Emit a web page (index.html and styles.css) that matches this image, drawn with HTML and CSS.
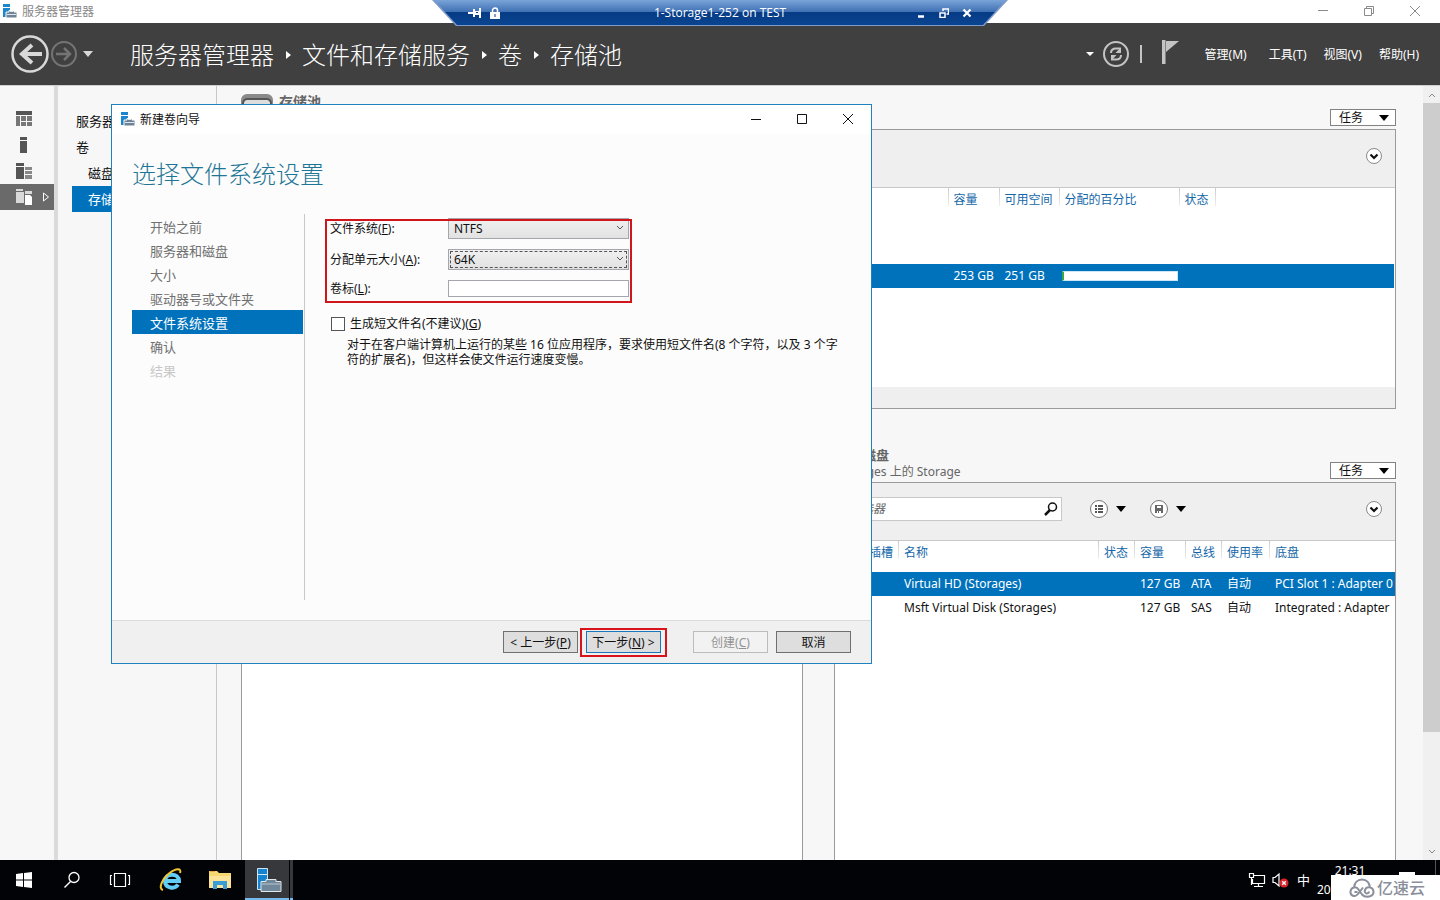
FILE: index.html
```html
<!DOCTYPE html>
<html lang="zh-CN">
<head>
<meta charset="utf-8">
<title>服务器管理器</title>
<link rel="stylesheet" href="styles.css">
</head>
<body>
<svg width="0" height="0" class="defs" aria-hidden="true">
  <symbol id="server" viewBox="0 0 16 16">
    <path d="M1 0h7v3H1zM1 4h7v3L5 9v4H1z" fill="#1c86cc"/>
    <path d="M7 8V6.500h5V8h3v6H4V8z" fill="#6e8496" stroke="#fff" stroke-width="1"/>
    <path d="M8 7.500h3M5 10.500h9" stroke="#dfe8ef" stroke-width="1" fill="none"/>
  </symbol>
  <symbol id="chevron-circle" viewBox="0 0 18 18">
    <circle cx="9" cy="9" r="7.500" fill="#fff" stroke="#8a8a8a"/>
    <path d="M5.500 7.500L9 11l3.500-3.500" fill="none" stroke="#111" stroke-width="2.200"/>
  </symbol>
</svg>

<div class="desktop">
  <header class="titlebar">
    <svg class="app-icon" viewBox="0 0 16 16"><use href="#server"/></svg>
    <span class="titlebar-text">服务器管理器</span>
    <div class="window-buttons">
      <button aria-label="最小化"><svg viewBox="0 0 12 12"><path d="M1 5.500h10"/></svg></button>
      <button aria-label="还原"><svg viewBox="0 0 12 12"><path d="M1.500 3.500h7v7h-7zM3.500 3V1.500h7v7H9"/></svg></button>
      <button aria-label="关闭"><svg viewBox="0 0 12 12"><path d="M1 1l10 10M11 1L1 11"/></svg></button>
    </div>
  </header>

  <div class="banner">
    <div class="history">
      <button aria-label="后退"><svg class="back" viewBox="0 0 38 38"><circle cx="19" cy="19" r="17.500" fill="none" stroke="#d8d8d8" stroke-width="2.500"/><path d="M31 19H10M21 10l-10 9 10 9" fill="none" stroke="#d8d8d8" stroke-width="4"/></svg></button>
      <button aria-label="前进"><svg class="forward" viewBox="0 0 26 26"><circle cx="13" cy="13" r="12" fill="none" stroke="#747474" stroke-width="2"/><path d="M5 13h14M13 7l6 6-6 6" fill="none" stroke="#747474" stroke-width="2.500"/></svg></button>
      <button aria-label="历史记录"><svg class="drop" viewBox="0 0 10 6"><path d="M0 0h10L5 6z" fill="#d8d8d8"/></svg></button>
    </div>
    <nav class="breadcrumb">
      <a href="#">服务器管理器</a><span class="sep"></span>
      <a href="#">文件和存储服务</a><span class="sep"></span>
      <a href="#">卷</a><span class="sep"></span>
      <a href="#">存储池</a>
    </nav>
    <div class="banner-tools">
      <svg class="mini-drop" viewBox="0 0 8 4"><path d="M0 0h8L4 4z" fill="#fff"/></svg>
      <button aria-label="刷新"><svg class="refresh" viewBox="0 0 26 26"><circle cx="13" cy="13" r="12" fill="none" stroke="#c4c4c4" stroke-width="2"/><path d="M8 12c0-3 2-4.500 5-4.500h4M18 14c0 3-2 4.500-5 4.500H9" fill="none" stroke="#c4c4c4" stroke-width="2"/><path d="M18 6v6h-5.500zM8 20v-6h5.500z" fill="#c4c4c4"/></svg></button>
      <span class="bar"></span>
      <button aria-label="通知"><svg class="flag" viewBox="0 0 18 24"><path d="M0 0h3.500v24H0zM4 1h13L4 12z" fill="#c4c4c4"/></svg></button>
    </div>
    <nav class="menu">
      <a href="#">管理(M)</a><a href="#">工具(T)</a><a href="#">视图(V)</a><a href="#">帮助(H)</a>
    </nav>
  </div>

  <div class="workspace">
    <nav class="rail">
      <a href="#" aria-label="仪表板"><svg viewBox="0 0 16 16"><path d="M0 0h16v4H0z" fill="#555"/><path d="M0 5h4v10H0zM5 5h5v5H5zM11 5h5v5h-5zM5 11h5v4H5zM11 11h5v4h-5z" fill="#777"/></svg></a>
      <a href="#" aria-label="本地服务器"><svg viewBox="0 0 16 16"><path d="M4 0h7v3H4zM4 4h7v12H4z" fill="#555"/></svg></a>
      <a href="#" aria-label="所有服务器"><svg viewBox="0 0 16 16"><path d="M0 0h8v3H0zM0 4h8v12H0z" fill="#555"/><path d="M9 4h7v3H9zM9 8h7v3H9zM9 12h7v4H9z" fill="#888"/></svg></a>
      <a href="#" class="active" aria-label="文件和存储服务"><svg viewBox="0 0 16 16"><path d="M0 0h7v2H0zM0 3h8v11H0zM9 2h7v3H9z" fill="#d9d9d9"/><path d="M9 6h5l2 2v8H9z" fill="#fff"/></svg><svg class="rail-arrow" viewBox="0 0 8 10"><path d="M1.500 1v8l5-4z" fill="none" stroke="#fff"/></svg></a>
    </nav>
    <nav class="side">
      <a href="#">服务器</a>
      <a href="#">卷</a>
      <a href="#" class="sub">磁盘</a>
      <a href="#" class="sub selected">存储池</a>
    </nav>

    <main class="content">
      <section class="tile pools">
        <div class="tile-head">
          <svg class="disk" viewBox="0 0 32 32"><rect x="0" y="0" width="32" height="32" rx="6" fill="#8a8a8a"/><path d="M2 9c0-2 2-4 4-4h20c2 0 4 2 4 4v22H2z" fill="#ddd" stroke="#555" stroke-width="2"/></svg>
          <div class="tile-title"><h2>存储池</h2></div>
          <button class="tasks">任务<svg viewBox="0 0 10 6"><path d="M0 0h10L5 6z"/></svg></button>
        </div>
        <div class="panel">
          <div class="toolbar"><button class="expand" aria-label="展开"><svg viewBox="0 0 18 18"><use href="#chevron-circle"/></svg></button></div>
          <table class="grid pools-grid">
            <colgroup><col><col class="w51"><col class="w60"><col class="w120"><col class="w36"><col class="w180"></colgroup>
            <thead><tr><td></td><th>容量</th><th>可用空间</th><th>分配的百分比</th><th>状态</th><th></th></tr></thead>
            <tbody><tr class="selected"><td></td><td>253 GB</td><td>251 GB</td><td><div class="meter"></div></td><td></td><td></td></tr></tbody>
          </table>
          <div class="panel-foot"></div>
        </div>
      </section>

      <div class="pair">
        <section class="tile">
          <div class="tile-head"></div>
          <div class="panel"></div>
        </section>
        <section class="tile">
          <div class="tile-head">
            <div class="tile-title"><h2>物理磁盘</h2><p>Storages 上的 Storage</p></div>
            <button class="tasks">任务<svg viewBox="0 0 10 6"><path d="M0 0h10L5 6z"/></svg></button>
          </div>
          <div class="panel">
            <div class="toolbar">
              <div class="filter">
                <input type="text" placeholder="筛选器" aria-label="筛选器">
                <svg viewBox="0 0 14 14"><circle cx="8.500" cy="5" r="4" fill="none" stroke="#111" stroke-width="1.500"/><path d="M6 8l-5 5" stroke="#111" stroke-width="2.500"/></svg>
              </div>
              <button class="tool" aria-label="视图"><svg class="round" viewBox="0 0 18 18"><circle cx="9" cy="9" r="8.500" fill="#fff" stroke="#777"/><path d="M5 6h2M5 9h2M5 12h2M8 6h5M8 9h5M8 12h5" stroke="#555" stroke-width="1.800"/></svg><svg class="tri" viewBox="0 0 10 6"><path d="M0 0h10L5 6z"/></svg></button>
              <button class="tool" aria-label="保存"><svg class="round" viewBox="0 0 18 18"><circle cx="9" cy="9" r="8.500" fill="#fff" stroke="#777"/><path d="M5 5h8v8H5z" fill="#666"/><path d="M7 6h4v2H7zM7 11h1v2H7zM9 11h2v2H9z" fill="#fff"/></svg><svg class="tri" viewBox="0 0 10 6"><path d="M0 0h10L5 6z"/></svg></button>
              <button class="expand" aria-label="展开"><svg viewBox="0 0 18 18"><use href="#chevron-circle"/></svg></button>
            </div>
            <table class="grid disks-grid">
              <colgroup><col class="w63"><col><col class="w36"><col class="w51"><col class="w36"><col class="w48"><col class="w126"></colgroup>
              <thead><tr><th class="right">插槽</th><th>名称</th><th>状态</th><th>容量</th><th>总线</th><th>使用率</th><th>底盘</th></tr></thead>
              <tbody>
                <tr class="selected"><td></td><td>Virtual HD (Storages)</td><td></td><td>127 GB</td><td>ATA</td><td>自动</td><td>PCI Slot 1 : Adapter 0</td></tr>
                <tr><td></td><td>Msft Virtual Disk (Storages)</td><td></td><td>127 GB</td><td>SAS</td><td>自动</td><td>Integrated : Adapter</td></tr>
              </tbody>
            </table>
          </div>
        </section>
      </div>
    </main>

    <div class="scroll">
      <svg viewBox="0 0 8 5"><path d="M1 4l3-3 3 3"/></svg>
      <div class="thumb"></div>
      <svg viewBox="0 0 8 5"><path d="M1 1l3 3 3-3"/></svg>
    </div>
  </div>

  <footer class="taskbar">
    <button aria-label="开始"><svg width="16" height="16" viewBox="0 0 16 16"><path d="M0 2l7-1v6.500H0zM8 1l8-1v7.500H8zM0 8.500h7V15l-7-1zM8 8.500h8V16l-8-1z" fill="#fff"/></svg></button>
    <button aria-label="搜索"><svg width="18" height="18" viewBox="0 0 18 18"><circle cx="11" cy="6.500" r="5" fill="none" stroke="#fff" stroke-width="1.300"/><path d="M7.500 10.500L1.500 16.500" stroke="#fff" stroke-width="1.500"/></svg></button>
    <button aria-label="任务视图"><svg width="22" height="16" viewBox="0 0 22 16"><path d="M5.500 1.500h11v13h-11zM3 3.500H1.500v9H3M19 3.500h1.500v9H19" fill="none" stroke="#fff" stroke-width="1.200"/></svg></button>
    <button class="wide" aria-label="Internet Explorer"><svg width="24" height="24" viewBox="0 0 24 24"><path d="M19 16.500c-3 5-13 4-13-3.500 0-8.500 14-8.500 14 0H7" fill="none" stroke="#62cdf5" stroke-width="4"/><path d="M4 22C-1 21 3 11 10 5.500S23 0 21 5" fill="none" stroke="#f3c52f" stroke-width="2"/></svg></button>
    <button class="wide" aria-label="文件资源管理器"><svg width="22" height="20" viewBox="0 0 22 20"><path d="M0 1h8l2 2h12v15H0z" fill="#f6d873"/><path d="M1 1h5v1H1z" fill="#e8a33d"/><path d="M0 6h22v12H0z" fill="#fbe49a"/><path d="M4 19v-8h14v8h-4v-4H8v4z" fill="#3a9ed6"/></svg></button>
    <button class="running" aria-label="服务器管理器"><svg width="26" height="26" viewBox="0 0 26 26"><path d="M1.500 2.500h10v21h-10z" fill="#1683cf" stroke="#cfe6f6"/><path d="M1 8.500h11" stroke="#cfe6f6"/><path d="M10 15.500V13.500h10v2h5v10H5v-10z" fill="#71879a" stroke="#dfe8ef"/><path d="M6 18h18" stroke="#b9c8d4"/></svg></button>
    <span class="running-more"></span>
    <div class="tray">
      <svg width="18" height="16" viewBox="0 0 18 16"><path d="M6 3.500h10.500v8H4.500V7M10.500 12v2M6 14.500h9M1.500 1.500h4v4h-4zM3.500 6v7" fill="none" stroke="#fff" stroke-width="1.200"/></svg>
      <svg width="18" height="16" viewBox="0 0 18 16"><path d="M1 5.500h2l4-3.500v12l-4-3.500H1z" fill="none" stroke="#fff" stroke-width="1.200"/><circle cx="12" cy="11" r="4.500" fill="#d9252a"/><path d="M10.200 9.200l3.600 3.600M13.800 9.200l-3.600 3.600" stroke="#fff" stroke-width="1.300"/></svg>
      <span class="ime">中</span>
      <div class="clock"><span>21:31</span><span class="date">20</span></div>
      <svg class="note" width="16" height="16" viewBox="0 0 16 16"><path d="M0 0h16v12H0z" fill="#fff"/></svg>
      <span class="peek"></span>
    </div>
  </footer>
</div>

<div class="remote-bar">
  <div class="remote-inner">
    <svg class="pin" viewBox="0 0 14 12"><path d="M0 6h6M6 2v8M6 6h6M12 1v10" fill="none" stroke="#fff" stroke-width="2"/><path d="M6 4h5v4H6z" fill="#fff"/><path d="M8 5h2v1H8z" fill="#12408b"/></svg>
    <svg class="lock" viewBox="0 0 10 12"><path d="M2.500 6V3.500a2.500 2.500 0 0 1 5 0V6" fill="none" stroke="#fff" stroke-width="1.500"/><path d="M0 5h10v7H0z" fill="#fff"/><path d="M4.500 7h1v3h-1z" fill="#12408b"/></svg>
    <span class="remote-name">1-Storage1-252 on TEST</span>
    <div class="remote-buttons">
      <button aria-label="最小化"><svg viewBox="0 0 10 10"><path d="M2 8.500h6" stroke-width="2.500"/></svg></button>
      <button aria-label="还原"><svg viewBox="0 0 10 10"><path d="M1 5h5v4.500H1zM4 3V1h5.500v5H7.500" stroke-width="1.500"/></svg></button>
      <button aria-label="关闭"><svg viewBox="0 0 10 10"><path d="M1.500 1.500l7 7M8.500 1.500l-7 7" stroke-width="2.200"/></svg></button>
    </div>
  </div>
</div>

<form class="dialog" role="dialog" aria-labelledby="wizard-name">
  <div class="dialog-bar">
    <svg class="app-icon" viewBox="0 0 16 16"><use href="#server"/></svg>
    <span id="wizard-name">新建卷向导</span>
    <div class="window-buttons dark">
      <button type="button" aria-label="最小化"><svg viewBox="0 0 12 12"><path d="M1 6.500h10"/></svg></button>
      <button type="button" aria-label="最大化"><svg viewBox="0 0 12 12"><path d="M1.500 1.500h9v9h-9z"/></svg></button>
      <button type="button" aria-label="关闭"><svg viewBox="0 0 12 12"><path d="M1 1l10 10M11 1L1 11"/></svg></button>
    </div>
  </div>
  <h1>选择文件系统设置</h1>
  <div class="dialog-body">
    <ol class="steps">
      <li>开始之前</li><li>服务器和磁盘</li><li>大小</li><li>驱动器号或文件夹</li><li class="current">文件系统设置</li><li>确认</li><li class="pending">结果</li>
    </ol>
    <div class="fields">
      <div class="field-grid">
        <label for="fs">文件系统(<u>F</u>):</label>
        <div class="select"><select id="fs"><option>NTFS</option></select><svg viewBox="0 0 8 5"><path d="M1 1l3 3 3-3"/></svg></div>
        <label for="unit">分配单元大小(<u>A</u>):</label>
        <div class="select focused"><select id="unit"><option>64K</option></select><svg viewBox="0 0 8 5"><path d="M1 1l3 3 3-3"/></svg></div>
        <label for="vol">卷标(<u>L</u>):</label>
        <input id="vol" class="text" type="text">
      </div>
      <div class="check"><input type="checkbox" id="short"><label for="short">生成短文件名(不建议)(<u>G</u>)</label></div>
      <p class="hint">对于在客户端计算机上运行的某些 16 位应用程序，要求使用短文件名(8 个字符，以及 3 个字符的扩展名)，但这样会使文件运行速度变慢。</p>
    </div>
  </div>
  <div class="dialog-foot">
    <button type="button">&lt; 上一步(<u>P</u>)</button>
    <span class="marked"><button type="button" class="primary">下一步(<u>N</u>) &gt;</button></span>
    <button type="button" class="create" disabled>创建(<u>C</u>)</button>
    <button type="button">取消</button>
  </div>
</form>

<div class="watermark">
  <svg viewBox="0 0 26 20"><path d="M5 9.500C5.500 5 8.500 1.500 13 1.500S20.500 5 21 9.500M14 9.500l-5 6.500c-3 4-8 1.500-7.500-2.500.5-4.500 6-5.500 8-2l3.500 5c3 3.500 12 3 11.500-3-.5-5-7-5.500-8.500-1.500-1.500 3.500 3.500 5 4 1.500M5.500 14h3" fill="none" stroke="#8b8e9b" stroke-width="2"/></svg>
  <span>亿速云</span>
</div>
</body>
</html>
```
FILE: styles.css
```css
*, *::before, *::after { box-sizing: border-box; }
html, body { height: 100%; }
body {
  margin: 0;
  position: relative;
  overflow: hidden;
  font: 12px/16px "Noto Sans", "Noto Sans CJK SC", sans-serif;
  color: #111;
}
button, input, select { font: inherit; color: inherit; }
button { padding: 0; border: 0; background: none; }
a { color: inherit; text-decoration: none; }
svg { display: block; flex: none; }
h1, h2, p, ol { margin: 0; padding: 0; font-weight: 400; }
.defs { position: absolute; }

.desktop { display: flex; flex-direction: column; height: 100vh; }

.titlebar { display: flex; align-items: center; height: 23px; padding-left: 2px; background: #fff; color: #888; }
.app-icon { width: 16px; height: 16px; }
.titlebar-text { margin-left: 4px; }
.window-buttons { display: flex; margin-left: auto; }
.window-buttons button { display: grid; place-items: center; width: 46px; height: 22px; }
.window-buttons svg { width: 12px; height: 12px; fill: none; stroke: #8a8a8a; }
.window-buttons.dark svg { stroke: #111; }
.titlebar .window-buttons { padding: 0 2px 2px 0; }

.banner { display: flex; align-items: center; height: 62px; padding: 0 21px 0 11px; background: #404040; color: #fff; }
.history { display: flex; align-items: center; width: 119px; gap: 2px; }
.back { width: 38px; height: 38px; }
.forward { width: 26px; height: 26px; }
.drop { width: 10px; height: 6px; margin-left: 4px; }
.breadcrumb { display: flex; align-items: center; padding-top: 2px; font-size: 24px; line-height: 32px; font-weight: 300; }
.sep { margin: 0 11px 0 12px; border: 4px solid transparent; border-left: 5px solid #fff; border-right: 0; }
.banner-tools { display: flex; align-items: center; margin-left: auto; }
.mini-drop { width: 8px; height: 4px; margin-right: 9px; }
.refresh { width: 26px; height: 26px; }
.bar { width: 2px; height: 18px; margin: 0 20px 0 11px; background: #c4c4c4; }
.flag { width: 18px; height: 24px; margin: 0 25px 4px 0; }
.menu { display: flex; gap: 22px; padding-top: 2px; }
.menu a:nth-child(n+3) { margin-left: -5px; }

.workspace { display: flex; flex: 1; min-height: 0; background: #f7f7f7; border-top: 1px solid #d0d0d0; }
.rail { width: 54px; padding-top: 20px; }
.rail a { display: flex; align-items: center; gap: 10px; height: 26px; padding-left: 16px; }
.rail svg { width: 16px; height: 16px; }
.rail .rail-arrow { width: 8px; height: 10px; }
.rail .active { background: #6a6a6a; }
.side { width: 163px; padding: 22px 0 0 14px; border-left: 4px solid #dadada; border-right: 1px solid #c8c8c8; font-size: 13px; }
.side a { display: flex; align-items: center; height: 26px; padding: 0 0 1px 4px; }
.side .sub { padding-left: 16px; }
.side .selected { background: #0072bc; color: #fff; }

.content { display: flex; flex: 1; flex-direction: column; min-width: 0; padding: 0 27px 0 24px; overflow: hidden; }
.tile { display: flex; flex: 1; flex-direction: column; min-width: 0; }
.tile-head { display: flex; align-items: flex-end; height: 43px; padding-bottom: 3px; }
.disk { width: 32px; height: 32px; margin-right: 6px; }
.tile-title { align-self: flex-start; padding-top: 6px; color: #666; }
.pools .tile-title { padding-top: 7px; }
.tile-title h2 { font-size: 14px; line-height: 18px; font-weight: 700; }
.tasks { display: flex; align-items: center; gap: 16px; height: 17px; margin-left: auto; padding: 0 6px 0 8px; border: 1px solid #828282; background: #fff; }
.tasks svg, .tri { width: 10px; height: 6px; }
.panel { flex: 1; min-height: 0; border: 1px solid #9a9a9a; background: #fff; overflow: hidden; }
.pools { flex: none; }
.pools .panel { display: flex; flex: none; flex-direction: column; height: 280px; }
.toolbar { display: flex; flex: none; align-items: center; height: 58px; padding: 0 12px 6px 10px; border-bottom: 1px solid #c8c8c8; background: #efefef; }
.expand { margin-left: auto; }
.expand svg, .round { width: 18px; height: 18px; }
.filter { display: flex; align-items: center; width: 217px; height: 24px; margin-right: 28px; padding-right: 3px; border: 1px solid #c8c8c8; background: #fff; }
.filter input { flex: 1; min-width: 0; padding: 0 3px; border: 0; background: none; font-style: italic; }
.filter input::placeholder { color: #666; }
.filter svg { width: 14px; height: 14px; }
.tool { display: flex; align-items: center; gap: 8px; margin-right: 24px; }
.grid { width: 100%; border-collapse: collapse; table-layout: fixed; }
.grid th, .grid td { padding: 0 0 0 6px; font-weight: 400; text-align: left; white-space: nowrap; overflow: hidden; }
.grid thead td, .grid th { height: 31px; padding-top: 4px; vertical-align: top; color: #1467a8; }
.grid th { background: linear-gradient(#ccc, #eee) left top / 1px 18px no-repeat; }
.grid tbody tr { height: 24px; }
.grid .selected { background: #0072bc; color: #fff; }
.grid .right { padding: 4px 5px 0 0; text-align: right; }
.pools-grid thead td, .pools-grid th { height: 76px; }
.pools-grid tbody { border-right: 1px solid #fff; }
.w36 { width: 36px; }
.w48 { width: 48px; }
.w51 { width: 51px; }
.w60 { width: 60px; }
.w63 { width: 63px; }
.w120 { width: 120px; }
.w126 { width: 126px; }
.w180 { width: 180px; }
.meter { width: 116px; height: 10px; margin-left: -3px; border: 1px solid #cfe6f6; border-left: 2px solid #3aa648; background: #fff; }
.panel-foot { height: 21px; margin-top: auto; background: #efefef; }
.pair { display: flex; flex: 1; gap: 31px; min-height: 0; padding-top: 28px; }
.pair .tile-title { padding: 9px 0 0 3px; }
.pair .tile-title h2 { font-size: 13px; }
.pair .tile-head { height: 45px; }
.pair .panel { border-bottom: 0; }
.scroll { display: flex; flex-direction: column; align-items: center; width: 17px; padding: 7px 0 6px; background: #f0f0f0; }
.scroll svg { width: 8px; height: 5px; fill: none; stroke: #888; }
.thumb { width: 17px; height: 629px; margin: 5px 0 auto; background: #cdcdcd; }

.taskbar { display: flex; height: 40px; background: #020306; color: #fff; }
.taskbar button { display: grid; place-items: center; width: 48px; }
.taskbar .wide { width: 49px; padding-left: 5px; }
.taskbar .running { width: 44px; margin-left: 3px; padding-left: 3px; background: #37383c; border-bottom: 2px solid #76b9ed; }
.running-more { width: 3px; margin-left: 1px; background: #37383c; border-bottom: 2px solid #76b9ed; }
.tray { display: flex; align-items: center; gap: 6px; margin-left: auto; }
.ime { margin-left: 1px; font-size: 13px; }
.clock { display: flex; flex-direction: column; align-items: center; width: 68px; line-height: 19px; }
.date { align-self: flex-start; padding-left: 1px; }
.note { margin-left: 9px; }
.peek { width: 5px; height: 40px; margin-left: 14px; border-left: 1px solid #555; }

.remote-bar { position: absolute; top: 0; left: 50%; width: 576px; height: 26px; margin-left: -288px; clip-path: polygon(0 0, 100% 0, 552px 100%, 24px 100%); background: #7f9cc9; }
.remote-inner { display: flex; align-items: center; height: 25px; padding: 0 36px; background: linear-gradient(#7aa4d8, #3f70b3 12px, #063b85 12px, #0a4490); clip-path: polygon(2px 0, 574px 0, 551px 100%, 25px 100%); color: #fff; }
.pin { width: 14px; height: 12px; }
.lock { width: 10px; height: 12px; margin-left: 8px; }
.remote-name { flex: 1; padding-left: 24px; font-family: "Open Sans", sans-serif; text-align: center; }
.remote-buttons { display: flex; gap: 13px; }
.remote-buttons svg { width: 10px; height: 10px; fill: none; stroke: #fff; }

.dialog { position: absolute; top: 104px; left: 111px; display: flex; flex-direction: column; width: 761px; min-height: 560px; border: 1px solid #1e82bd; background: #fcfcfc; }
.dialog-bar { display: flex; align-items: center; height: 29px; padding-left: 8px; background: #fff; }
.dialog-bar .app-icon { margin-right: 4px; }
.dialog-bar .window-buttons { padding-bottom: 2px; }
.dialog h1 { padding: 24px 20px 0; color: #1f7595; font-size: 24px; line-height: 32px; font-weight: 300; }
.dialog-body { display: flex; flex: 1; padding: 24px 20px 20px; }
.steps { width: 173px; padding-right: 1px; border-right: 1px solid #c8c8c8; list-style: none; color: #707070; font-size: 13px; line-height: 24px; }
.steps li { height: 24px; padding: 1px 0 0 18px; }
.steps .current { background: #0072bc; color: #fff; }
.steps .pending { color: #c8c8c8; }
.fields { flex: 1; min-width: 0; padding: 4px 0 0 25px; }
.field-grid { position: relative; display: grid; grid-template-columns: 118px 181px; row-gap: 10px; align-items: center; }
.field-grid::after { content: ""; position: absolute; inset: 1px auto -6px -5px; width: 307px; border: 2px solid #d0161b; pointer-events: none; }
.select { position: relative; height: 21px; }
.select select { width: 100%; height: 100%; padding: 0 5px; appearance: none; border: 1px solid #a5a5ad; border-radius: 0; background: linear-gradient(#f0f0f0, #e2e2e2); }
.select svg { position: absolute; top: 7px; right: 5px; width: 8px; height: 5px; fill: none; stroke: #555; }
.focused select { outline: 1px dashed #555; outline-offset: -3px; }
.text { width: 100%; height: 17px; border: 1px solid #a5a5ad; background: #fff; }
.check { display: flex; align-items: center; gap: 5px; margin: 19px 0 0 1px; height: 16px; }
.check input { appearance: none; width: 14px; height: 14px; margin: 0; border: 1px solid #555; background: #fff; }
.hint { margin: 5px 0 0 17px; padding-right: 6px; line-height: 15px; }
.dialog-foot { display: flex; align-items: center; justify-content: flex-end; gap: 8px; height: 43px; padding-right: 20px; border-top: 1px solid #dcdcdc; background: #f0f0f0; }
.dialog-foot button { width: 75px; height: 22px; padding-top: 2px; border: 1px solid #707070; background: #dedede; white-space: nowrap; }
.dialog-foot .primary { border: 1px solid #1a75bb; }
.dialog-foot .create { margin-left: 24px; border-color: #bcbcbc; background: #f2f2f2; color: #929292; }
.marked { position: relative; display: flex; }
.marked::after { content: ""; position: absolute; inset: -3px -6px -4px; border: 2px solid #d8141a; pointer-events: none; }

.watermark { position: absolute; right: 0; bottom: 0; display: flex; align-items: center; gap: 2px; width: 109px; height: 25px; padding-left: 18px; background: #fff; color: #8b8e9b; font-size: 16px; line-height: 24px; font-weight: 500; }
.watermark svg { width: 26px; height: 20px; }
```
